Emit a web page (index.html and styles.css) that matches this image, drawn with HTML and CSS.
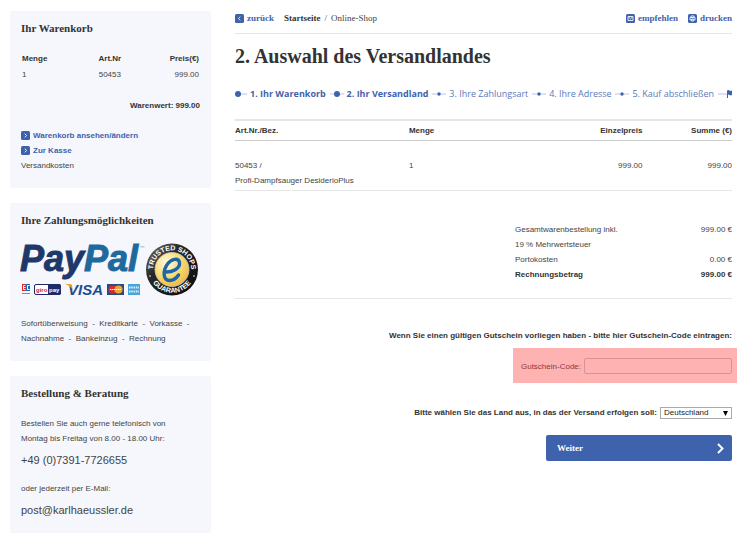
FILE: index.html
```html
<!DOCTYPE html>
<html lang="de">
<head>
<meta charset="utf-8">
<meta name="viewport" content="width=device-width, initial-scale=1">
<title>Auswahl des Versandlandes</title>
<link rel="stylesheet" href="styles.css">
</head>
<body>
<div class="page">
  <aside class="sidebar">
    <section class="card">
      <h2>Ihr Warenkorb</h2>
      <table class="cart">
        <thead><tr><th>Menge</th><th class="mid">Art.Nr</th><th class="num">Preis(€)</th></tr></thead>
        <tbody><tr><td>1</td><td class="mid">50453</td><td class="num">999.00</td></tr></tbody>
      </table>
      <p class="worth">Warenwert: 999.00</p>
      <ul class="links">
        <li><a class="action" href="#"><svg class="icon" viewBox="0 0 9 9"><rect width="9" height="9" rx="1.5"/><path d="M3.7 2.7l2 1.8-2 1.8"/></svg>Warenkorb ansehen/ändern</a></li>
        <li><a class="action" href="#"><svg class="icon" viewBox="0 0 9 9"><rect width="9" height="9" rx="1.5"/><path d="M3.7 2.7l2 1.8-2 1.8"/></svg>Zur Kasse</a></li>
        <li><a class="plain" href="#">Versandkosten</a></li>
      </ul>
    </section>

    <section class="card">
      <h2>Ihre Zahlungsmöglichkeiten</h2>
      <svg class="payments" viewBox="0 0 180 58" role="img" aria-label="PayPal, Trusted Shops und Kartenzahlung">
        <defs>
          <radialGradient id="gold" cx=".35" cy=".3" r=".8"><stop offset="0" stop-color="#fffbe0"/><stop offset=".5" stop-color="#f8dc7a"/><stop offset="1" stop-color="#e9b63c"/></radialGradient>
          <linearGradient id="seal" x1="0" y1="0" x2="1" y2="1"><stop offset="0" stop-color="#777"/><stop offset=".35" stop-color="#292929"/><stop offset="1" stop-color="#080808"/></linearGradient>
          <path id="arc-top" d="M132.700 31.500A19 19 0 1 1 169.300 31.500"/>
          <path id="arc-bottom" d="M127.800 30A23.500 23.500 0 0 0 174.200 30"/>
        </defs>
        <text class="paypal" x="-1" y="28"><tspan fill="#1d3869" stroke="#1d3869">Pay</tspan><tspan fill="#20699f" stroke="#20699f">Pal</tspan></text>
        <path d="M119 3h2M120 3v2M121.500 5V3l.7 1 .8-1v2" fill="none" stroke="#7fa9c9" stroke-width=".4"/>
        <rect x="1" y="41" width="8" height="7" fill="#d6273b"/>
        <path d="M5 41h4v7H5z" fill="#236fad"/>
        <path d="M4.500 42.500H2.500v4h2M2.500 44.500h2M8.500 42.500h-2v4h2" fill="none" stroke="#fff"/>
        <path d="M1 50.500h8" stroke="#8b8b98"/>
        <rect x="13.500" y="41.500" width="26" height="10" rx="1.500" fill="#fff" stroke="#1e2b6b"/>
        <path d="M27 41h11q2 0 2 2v7q0 2-2 2H27z" fill="#1e2b6b"/>
        <text class="giro" x="15" y="48.500" fill="#d5203b">giro</text>
        <text class="giro" x="28" y="48.500" fill="#fff">pay</text>
        <text class="visa" x="47" y="52" fill="#204b91">VISA</text>
        <path d="M44 41h6l2 6q-2-4-8-6z" fill="#eca229"/>
        <rect x="86" y="41" width="17" height="11" fill="#294b84"/>
        <circle cx="91.500" cy="46.500" r="4" fill="#d42c34"/>
        <circle cx="97.500" cy="46.500" r="4" fill="#eda53a"/>
        <path d="M89 46.500h11" stroke="#fff" stroke-width="1.200" stroke-dasharray="1.500 .5"/>
        <rect x="107" y="41" width="12" height="11" fill="#48a5dc"/>
        <path d="M108 44.500h10M108 48.500h10" stroke="#d7effb" stroke-width="1.800" stroke-dasharray="1.600 .7"/>
        <circle cx="151" cy="26.500" r="26" fill="url(#seal)"/>
        <circle cx="151" cy="26.500" r="17" fill="url(#gold)" stroke="#c9c9bd" stroke-width=".8"/>
        <text class="ring"><textPath href="#arc-top" startOffset="50%" text-anchor="middle">TRUSTED SHOPS</textPath></text>
        <text class="ring"><textPath href="#arc-bottom" startOffset="50%" text-anchor="middle">GUARANTEE</textPath></text>
        <circle cx="129" cy="33" r=".8" fill="#fff"/><circle cx="173" cy="33" r=".8" fill="#fff"/>
        <path d="M144 29c7 .5 15.500-3.500 14.500-9.500-1-5-8-4-12 1.500-5 7-4.500 16.500 2 16.500 4 0 7-2.500 9-5.500" fill="none" stroke="#1d66a8" stroke-width="3.400" stroke-linecap="round"/>
      </svg>
      <p>Sofortüberweisung&nbsp; -&nbsp; Kreditkarte&nbsp; -&nbsp; Vorkasse&nbsp; -<br>Nachnahme&nbsp; -&nbsp; Bankeinzug&nbsp; -&nbsp; Rechnung</p>
    </section>

    <section class="card">
      <h2>Bestellung &amp; Beratung</h2>
      <p>Bestellen Sie auch gerne telefonisch von<br>Montag bis Freitag von 8.00 - 18.00 Uhr:</p>
      <p class="contact"><a class="plain" href="tel:+4973917726655">+49 (0)7391-7726655</a></p>
      <p>oder jederzeit per E-Mail:</p>
      <p class="contact last"><a class="plain" href="mailto:post@karlhaeussler.de">post@karlhaeussler.de</a></p>
    </section>
  </aside>

  <main class="main">
    <div class="topbar">
      <a class="action back" href="#"><svg class="icon" viewBox="0 0 9 9"><rect width="9" height="9" rx="1.500"/><path d="M5.300 2.700l-2 1.800 2 1.800"/></svg>zurück</a>
      <nav class="crumbs"><a class="plain" href="#"><b>Startseite</b></a><span>/</span><a class="plain" href="#">Online-Shop</a></nav>
      <div class="tools">
        <a class="action" href="#"><svg class="icon" viewBox="0 0 9 9"><rect width="9" height="9" rx="1.500"/><path d="M2 2.500h5v4H2zM2 2.500l2.500 2.300L7 2.500"/></svg>empfehlen</a>
        <a class="action" href="#"><svg class="icon" viewBox="0 0 9 9"><rect width="9" height="9" rx="1.500"/><path d="M3 3.500V2h3v1.500M2 3.500h5v2.500H2zM3.500 5h2v2h-2z"/></svg>drucken</a>
      </div>
    </div>

    <h1>2. Auswahl des Versandlandes</h1>

    <ol class="steps">
      <li class="done"><svg class="start" viewBox="0 0 12 8"><path d="M3 4h9"/><circle cx="3" cy="4" r="3"/></svg>1. Ihr Warenkorb</li>
      <li class="done"><svg viewBox="0 0 14 8"><path d="M0 4h14"/><circle cx="7" cy="4" r="3"/></svg>2. Ihr Versandland</li>
      <li><svg viewBox="0 0 14 8"><path d="M0 4h14"/><circle cx="7" cy="4" r="1.700"/></svg>3. Ihre Zahlungsart</li>
      <li><svg viewBox="0 0 14 8"><path d="M0 4h14"/><circle cx="7" cy="4" r="1.700"/></svg>4. Ihre Adresse</li>
      <li><svg viewBox="0 0 14 8"><path d="M0 4h14"/><circle cx="7" cy="4" r="1.700"/></svg>5. Kauf abschließen</li>
      <li><svg viewBox="0 0 14 8"><path d="M0 4h9"/><path class="flag" d="M9 .5q1.500-.8 2.500 0t2.500 0V5q-1.300.8-2.300 0T10 5v3H9z"/></svg></li>
    </ol>

    <table class="items">
      <colgroup><col class="c-art"><col class="c-qty"><col class="c-price"><col class="c-sum"></colgroup>
      <thead><tr><th>Art.Nr./Bez.</th><th>Menge</th><th class="num">Einzelpreis</th><th class="num">Summe (€)</th></tr></thead>
      <tbody><tr><td>50453 /<br>Profi-Dampfsauger DesiderioPlus</td><td>1</td><td class="num">999.00</td><td class="num">999.00</td></tr></tbody>
    </table>

    <div class="summary">
      <table class="totals">
        <tbody>
          <tr><td>Gesamtwarenbestellung inkl.<br>19 % Mehrwertsteuer</td><td class="num">999.00 €</td></tr>
          <tr><td>Portokosten</td><td class="num">0.00 €</td></tr>
          <tr><th>Rechnungsbetrag</th><th class="num">999.00 €</th></tr>
        </tbody>
      </table>
    </div>

    <form class="checkout">
      <p class="prompt">Wenn Sie einen gültigen Gutschein vorliegen haben - bitte hier Gutschein-Code eintragen:</p>
      <div class="voucher"><label for="code">Gutschein-Code:</label><input id="code" type="text"></div>
      <div class="country">
        <label for="land">Bitte wählen Sie das Land aus, in das der Versand erfolgen soll:</label>
        <span class="select"><select id="land"><option>Deutschland</option></select><svg viewBox="0 0 5 5"><path d="M0 0h5L2.500 5z"/></svg></span>
      </div>
      <button class="next" type="submit"><span>Weiter</span><svg viewBox="0 0 7 11"><path d="M1 1l4.500 4.500L1 10"/></svg></button>
    </form>
  </main>
</div>
</body>
</html>
```

FILE: styles.css
```css
* { box-sizing: border-box; }

body {
  margin: 0;
  background: #fff;
  color: #444;
  font: 8px/15px "Liberation Sans", Arial, sans-serif;
}

h1, h2, p, ul, ol { margin: 0; padding: 0; }
ul, ol { list-style: none; }
table { width: 100%; border-collapse: collapse; }
th, td { padding: 0; text-align: left; vertical-align: top; }
th, b { font-weight: bold; color: #333; }
.num { text-align: right; }
.mid { text-align: center; }

h1, h2 { font-family: "Liberation Serif", "Times New Roman", serif; color: #333; }

.page {
  display: grid;
  grid-template-columns: 201px 1fr;
  gap: 24px;
  padding: 11px 8px 8px 10px;
}

.sidebar { display: flex; flex-direction: column; gap: 15px; }

.card {
  padding: 10px 11px 15px;
  border-radius: 2px;
  background: #f5f7fc;
}

.card h2 { margin-bottom: 15px; font-size: 11px; line-height: 15px; }

.cart { line-height: 16px; }
.cart th:first-child, .cart td:first-child { padding-left: 1px; }
.cart .mid { padding-left: 7px; }
.cart .num { padding-right: 1px; }
.worth { margin: 15px 0; font-weight: bold; color: #333; text-align: right; }

a { text-decoration: none; }
.plain { color: inherit; }
.action {
  display: inline-flex;
  align-items: center;
  gap: 3px;
  color: #3f62ac;
  font-weight: bold;
}

.links li { display: flex; }
.icon { width: 9px; height: 9px; fill: #3f62ac; }
.icon path { fill: none; stroke: #dfe7f7; }

.payments {
  display: block;
  width: 180px;
  height: 58px;
  margin-bottom: 15px;
  overflow: visible;
}
.paypal { font: italic bold 36px "Liberation Sans", Arial, sans-serif; }
.giro { font-size: 6px; font-weight: bold; }
.visa { font: italic bold 15px "Liberation Sans", Arial, sans-serif; }
.ring { font-size: 7px; font-weight: bold; fill: #fff; }

.contact { margin: 7px 0 13px; font-size: 11px; }
.contact.last { margin-bottom: 0; }

.topbar {
  display: flex;
  align-items: center;
  height: 23px;
  padding-bottom: 7px;
  border-bottom: 1px solid #e6e6e6;
  font: 9px/15px "Liberation Serif", "Times New Roman", serif;
}
.crumbs { display: flex; gap: 4px; margin-left: 10px; }
.tools { display: flex; gap: 10px; margin-left: auto; }

h1 { margin: 10px 0 20px; font-size: 20px; line-height: 24px; }

.steps {
  display: flex;
  justify-content: space-between;
  color: #5a7abb;
  font: 9px/12px "Open Sans", sans-serif;
}
.steps li { display: flex; align-items: center; gap: 3px; white-space: nowrap; }
.steps svg { width: 14px; height: 8px; fill: #3f62ac; }
.steps .start { width: 12px; }
.steps path { stroke: #b8c6e4; }
.steps .flag { stroke: none; }
.steps .done { color: #3f62ac; font-weight: bold; }

.items { margin-top: 19px; table-layout: fixed; border-bottom: 1px solid #e6e6e6; }
.c-art { width: 35%; }
.c-qty { width: 24%; }
.c-price { width: 23%; }
.items thead tr { border-top: 2px solid #e6e6e6; border-bottom: 1px solid #ccc; }
.items th { padding: 2px 0; }
.items td { padding: 17px 0 2px; }

.summary { padding: 31px 0 16px; border-bottom: 1px solid #e6e6e6; }
.totals { width: 217px; margin-left: auto; }

.checkout {
  display: flex;
  flex-direction: column;
  align-items: flex-end;
  padding-top: 29px;
}
.prompt, .country { color: #333; font-weight: bold; }
.voucher {
  display: flex;
  align-items: center;
  gap: 3px;
  margin: 5px -5px 22px 0;
  padding: 10px 5px 9px 8px;
  background: #ffb2b2;
  color: #8a3a3f;
}
.voucher input {
  width: 148px;
  height: 16px;
  padding: 0 4px;
  border: 1px solid #dc9294;
  border-radius: 2px;
  background: transparent;
  font: inherit;
}
.country { display: flex; align-items: center; gap: 3px; }
.select { position: relative; display: flex; }
.select select {
  width: 72px;
  height: 12px;
  padding: 0 3px;
  appearance: none;
  border: 1px solid #aaa;
  border-radius: 0;
  background: #fff;
  color: #222;
  font: 8px/10px "Liberation Sans", Arial, sans-serif;
}
.select svg {
  position: absolute;
  top: 4px;
  right: 4px;
  width: 5px;
  height: 5px;
  pointer-events: none;
}

.next {
  display: flex;
  align-items: center;
  justify-content: space-between;
  width: 186px;
  height: 26px;
  margin-top: 15px;
  padding: 0 8px 0 11px;
  border: 0;
  border-radius: 2px;
  background: #3f62ac;
  color: #fff;
  font: bold 9px/15px "Liberation Serif", "Times New Roman", serif;
}
.next svg { width: 7px; height: 11px; fill: none; stroke: #fff; stroke-width: 2; }
```
